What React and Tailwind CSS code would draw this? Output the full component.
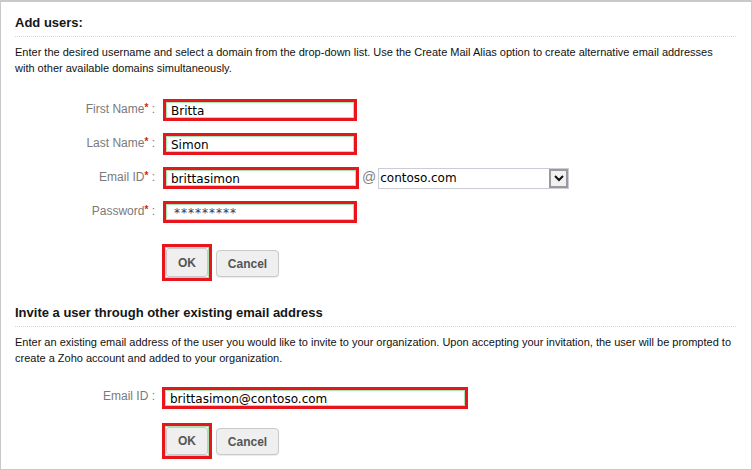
import React from "react";

const SANS = { fontFamily: '"Liberation Sans", Arial, sans-serif' };

function Field({ width, value, password }) {
  return (
    <div className={`h-[22px] border-[3px] border-[#e8151d] ${width}`}>
      <div className="h-full border border-[#a9e2b3] bg-white pl-[4px] pt-[1px]">
        <span
          className={[
            "block whitespace-nowrap text-[12px] leading-[14px]",
            password ? "text-[#2b3a67] tracking-[1px] pl-[3px]" : "text-black",
          ].join(" ")}
          style={{ fontFamily: '"DejaVu Sans", Verdana, sans-serif' }}
        >
          {value}
        </span>
      </div>
    </div>
  );
}

function Label({ text, required }) {
  return (
    <div className="w-[142px] shrink-0 pt-[2px] pr-[2px] text-right text-[12px] leading-[14px] text-[#7a7a7a] whitespace-nowrap">
      {text}
      {required && (
        <span className="align-[2px] text-[10px] font-bold text-[#e0151d]">*</span>
      )}
      <span> :</span>
    </div>
  );
}

function Buttons({ okHeight, cancelTop }) {
  return (
    <div className="flex items-start pl-[147px]">
      <div className={`w-[50px] border-[3px] border-[#e8151d] ${okHeight}`}>
        <div className="h-full border border-[#a9e2b3]">
          <div className="flex h-full items-center justify-center rounded-[3px] border border-[#c9c9c9] bg-[#efefef] text-[12px] font-bold text-[#555]">
            OK
          </div>
        </div>
      </div>
      <div
        className={`ml-[4px] flex h-[27px] w-[63px] items-center justify-center rounded-[4px] border border-[#c9c9c9] bg-[#efefef] text-[12px] font-bold text-[#555] shadow-[0_1px_1px_rgba(0,0,0,0.08)] ${cancelTop}`}
      >
        Cancel
      </div>
    </div>
  );
}

function Heading({ children }) {
  return (
    <h2 className="border-b border-dotted border-[#d6d6d6] pb-[5px] text-[13px] font-bold leading-[16px] text-[#151515]">
      {children}
    </h2>
  );
}

export default function App() {
  return (
    <div
      className="h-[470px] w-[752px] overflow-hidden border border-t-2 border-[#c9c9c9] bg-white pl-[14px] pr-[15px] pt-[13px]"
      style={SANS}
    >
      {/* Add users */}
      <Heading>Add users:</Heading>
      <p className="mt-[7px] whitespace-nowrap text-[11px] leading-[16px] text-[#111]">
        Enter the desired username and select a domain from the drop-down list. Use the Create Mail Alias option to create alternative email addresses
        <br />
        with other available domains simultaneously.
      </p>

      <div className="mt-[23px] flex flex-col gap-[12px]">
        <div className="flex h-[22px] items-start gap-[6px]">
          <Label text="First Name" required />
          <Field width="w-[194px]" value="Britta" />
        </div>
        <div className="flex h-[22px] items-start gap-[6px]">
          <Label text="Last Name" required />
          <Field width="w-[194px]" value="Simon" />
        </div>
        <div className="flex h-[22px] items-start gap-[6px]">
          <Label text="Email ID" required />
          <Field width="w-[196px]" value="brittasimon" />
          <span className="ml-[-3px] pt-[2px] text-[14px] leading-[16px] text-[#808080]">@</span>
          <div className="ml-[-4px] mt-[1px] flex h-[21px] w-[191px] border border-[#cbcdd6] bg-white">
            <span
              className="flex-1 pl-[1px] pt-[2px] text-[12px] leading-[14px] text-black"
              style={{ fontFamily: '"DejaVu Sans", Verdana, sans-serif' }}
            >
              contoso.com
            </span>
            <div className="flex w-[19px] items-center justify-center border-2 border-[#9a9a9a] bg-[#f1f1f1]">
              <svg width="10" height="7" viewBox="0 0 10 7">
                <polyline points="1,1 5,5 9,1" fill="none" stroke="#111" strokeWidth="2" />
              </svg>
            </div>
          </div>
        </div>
        <div className="flex h-[22px] items-start gap-[6px]">
          <Label text="Password" required />
          <Field width="w-[194px]" value="*********" password />
        </div>
      </div>

      <div className="mt-[21px]">
        <Buttons okHeight="h-[37px]" cancelTop="mt-[6px]" />
      </div>

      {/* Invite a user */}
      <div className="mt-[24px]">
        <Heading>Invite a user through other existing email address</Heading>
      </div>
      <p className="mt-[7px] whitespace-nowrap text-[11px] leading-[16px] text-[#111]">
        Enter an existing email address of the user you would like to invite to your organization. Upon accepting your invitation, the user will be prompted to
        <br />
        create a Zoho account and added to your organization.
      </p>

      <div className="mt-[21px] flex h-[22px] items-start gap-[5px]">
        <Label text="Email ID" />
        <Field width="w-[306px]" value="brittasimon@contoso.com" />
      </div>

      <div className="mt-[14px]">
        <Buttons okHeight="h-[36px]" cancelTop="mt-[5px]" />
      </div>
    </div>
  );
}
